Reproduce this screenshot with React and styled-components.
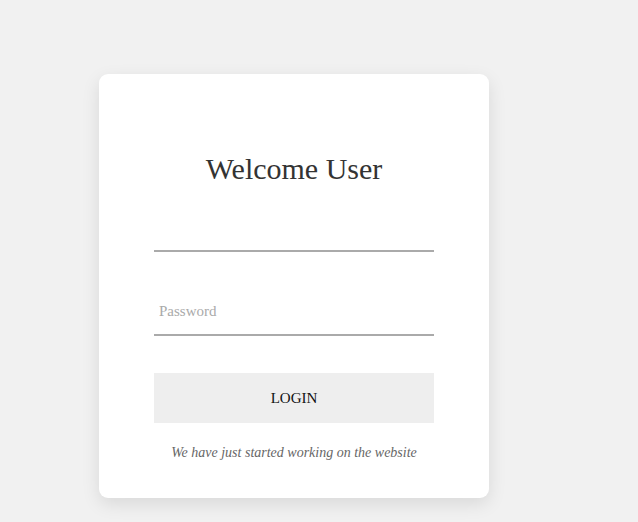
import React from "react";
import styled, { createGlobalStyle } from "styled-components";

const Global = createGlobalStyle`
  html, body { margin: 0; padding: 0; background: #f1f1f1; }
  body { font-family: "Liberation Serif", "Times New Roman", serif; }
`;

const Page = styled.div`
  min-height: 522px;
  box-sizing: border-box;
  padding: 74px 0 0 99px;
`;

const Card = styled.form`
  width: 390px;
  box-sizing: border-box;
  padding: 78px 55px 37px;
  background: #fff;
  border-radius: 9px;
  box-shadow: 0 6px 18px rgba(0, 0, 0, 0.1);
  display: flex;
  flex-direction: column;
`;

const Title = styled.h2`
  margin: 0 0 21px;
  font-size: 30px;
  line-height: 34px;
  font-weight: normal;
  color: #333;
  text-align: center;
`;

const Field = styled.input`
  display: block;
  width: 100%;
  box-sizing: border-box;
  height: 45px;
  margin: 0 0 ${(p) => p.$gap}px;
  padding: 0 5px 2px;
  border: none;
  border-bottom: 2px solid #aaa;
  outline: none;
  background: transparent;
  font-family: "Liberation Serif", "Times New Roman", serif;
  font-size: 15px;
  color: #333;
  caret-color: #333;
  &::placeholder { color: #aaa; }
`;

const Button = styled.button`
  display: block;
  width: 100%;
  height: 50px;
  border: none;
  background: #eee;
  font-family: "Liberation Serif", "Times New Roman", serif;
  font-size: 15px;
  color: #111;
  cursor: pointer;
  padding: 0;
`;

const Note = styled.p`
  margin: 22px 0 0;
  font-size: 14px;
  line-height: 16px;
  font-style: italic;
  color: #666;
  text-align: center;
`;

export default function App() {
  return (
    <Page>
      <Global />
      <Card onSubmit={(e) => e.preventDefault()}>
        <Title>Welcome User</Title>
        <Field type="text" autoFocus $gap={39} />
        <Field type="password" placeholder="Password" $gap={37} />
        <Button type="submit">LOGIN</Button>
        <Note>We have just started working on the website</Note>
      </Card>
    </Page>
  );
}
